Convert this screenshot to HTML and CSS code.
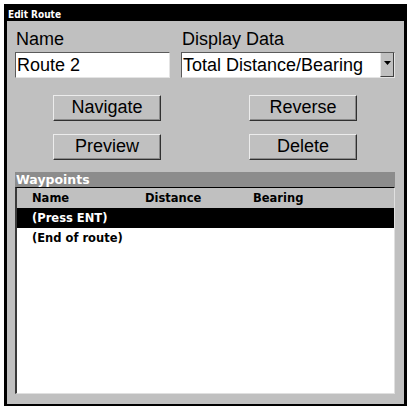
FILE: index.html
```html
<!DOCTYPE html>
<html>
<head>
<meta charset="utf-8">
<link rel="stylesheet" href="styles.css">
</head>
<body>
<div class="window">
  <div class="titlebar">Edit Route</div>
  <div class="content">
    <div class="fields">
      <div class="field">
        <div class="label">Name</div>
        <div class="input">Route 2</div>
      </div>
      <div class="field">
        <div class="label">Display Data</div>
        <div class="select">
          <span class="select-value">Total Distance/Bearing</span>
          <span class="select-arrow"><svg width="7" height="4" viewBox="0 0 7 4"><polygon points="0,0 7,0 3.5,4" fill="#000"/></svg></span>
        </div>
      </div>
    </div>
    <div class="buttons">
      <div class="btn-row"><div class="btn">Navigate</div><div class="btn">Reverse</div></div>
      <div class="btn-row"><div class="btn">Preview</div><div class="btn">Delete</div></div>
    </div>
    <div class="group-title">Waypoints</div>
    <div class="list">
      <div class="row head"><span>Name</span><span>Distance</span><span>Bearing</span></div>
      <div class="row selected"><span>(Press ENT)</span></div>
      <div class="row"><span>(End of route)</span></div>
    </div>
  </div>
</div>
</body>
</html>
```
FILE: styles.css
```css
html, body {
  margin: 0;
  padding: 0;
  background: #ffffff;
  overflow: hidden;
}
.window {
  margin: 4px 0 0 4px;
  width: 403px;
  box-sizing: border-box;
  border: 3px solid #000;
  border-top: 0;
  background: #c0c0c0;
  font-family: "Liberation Sans", Arial, sans-serif;
  color: #000;
}
.titlebar {
  height: 17px;
  background: #000;
  color: #fff;
  font-family: "DejaVu Sans Condensed", "DejaVu Sans", sans-serif;
  font-stretch: condensed;
  font-weight: bold;
  font-size: 10px;
  line-height: 17px;
  padding: 2px 0 0 1px;
  box-sizing: border-box;
}
.content {
  padding: 8px 9px 10px 8px;
}
.fields {
  display: grid;
  grid-template-columns: 155px 214px;
  column-gap: 11px;
}
.label {
  font-size: 18px;
  line-height: 20px;
  margin-bottom: 3px;
  padding-left: 1px;
}
.input, .select {
  height: 26px;
  box-sizing: border-box;
  border-top: 1px solid #5a5a5a;
  border-left: 1px solid #5a5a5a;
  border-right: 1px solid #e4e4e4;
  border-bottom: 1px solid #e4e4e4;
  background: #fff;
  font-size: 18px;
  line-height: 24px;
}
.input {
  padding-left: 1px;
}
.select {
  display: flex;
  align-items: stretch;
}
.select-value {
  flex: 1;
  padding-left: 1px;
  white-space: nowrap;
}
.select-arrow {
  width: 14px;
  background: #c0c0c0;
  box-sizing: border-box;
  border-left: 1px solid #e8e8e8;
  border-right: 1px solid #404040;
  border-bottom: 1px solid #404040;
  display: flex;
  align-items: center;
  justify-content: center;
  padding-bottom: 3px;
  margin-left: 2px;
}
.buttons {
  margin-top: 17px;
  display: flex;
  flex-direction: column;
  gap: 13px;
  padding: 0 38px;
}
.btn-row {
  display: flex;
  justify-content: space-between;
}
.btn {
  width: 108px;
  height: 26px;
  box-sizing: border-box;
  border-top: 1px solid #ececec;
  border-left: 1px solid #ececec;
  border-right: 1px solid #303030;
  border-bottom: 1px solid #303030;
  box-shadow: inset -1px -1px 0 #8a8a8a;
  text-align: center;
  font-size: 18px;
  line-height: 23px;
}
.group-title {
  margin-top: 12px;
  height: 15px;
  background: #8c8c8c;
  color: #fff;
  font-family: "DejaVu Sans", sans-serif;
  font-weight: bold;
  font-size: 12.5px;
  line-height: 15px;
  padding-left: 1px;
}
.list {
  height: 207px;
  box-sizing: border-box;
  background: #fff;
  border-top: 1px solid #000;
  border-left: 2px solid #3a3a3a;
  border-right: 1px solid #e0e0e0;
  border-bottom: 1px solid #e0e0e0;
}
.row {
  display: grid;
  grid-template-columns: 113px 108px auto;
  padding-left: 15px;
  height: 20px;
  line-height: 20px;
  font-family: "DejaVu Sans", sans-serif;
  font-weight: bold;
  font-size: 11.5px;
  white-space: nowrap;
}
.row.head {
  background: #c0c0c0;
}
.row.selected {
  background: #000;
  color: #fff;
}
```
